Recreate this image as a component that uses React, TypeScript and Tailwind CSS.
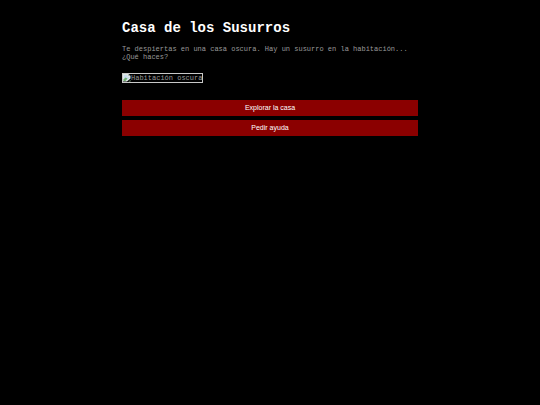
const scene = {
  title: 'Casa de los Susurros',
  text: 'Te despiertas en una casa oscura. Hay un susurro en la habitación... ¿Qué haces?',
  imageAlt: 'Habitación oscura',
  options: ['Explorar la casa', 'Pedir ayuda'],
};

function SceneImage({ alt }: { alt: string }) {
  return (
    <div className="flex w-fit items-start border border-[#c8c8c8]">
      {/* Missing picture icon */}
      <svg viewBox="0 0 16 16" className="h-2 w-2 shrink-0" aria-hidden="true">
        <path d="M0 0H11L15 4V9L8 15H0Z" fill="#dfe9e6" />
        <path d="M2 2H9V6H13V8L7 12H2Z" fill="#c9dcee" />
        <path d="M1 11L5 7L9 9L5 14H1Z" fill="#6fae6f" />
        <path d="M15 12V15H11Z" fill="#8fb58f" />
        <path d="M11 0L15 4H11Z" fill="#8c9694" />
      </svg>
      <span className="text-[7px] leading-[8px]">{alt}</span>
    </div>
  );
}

export default function App() {
  return (
    <div className="min-h-screen bg-black px-5 pt-5 font-['Courier_New',Courier,'Liberation_Mono',monospace] text-[#999999]">
      <main className="mx-auto max-w-[296px]">
        <h1 className="text-[14px] leading-4 font-bold text-white">{scene.title}</h1>
        <p className="mt-[9px] text-[7px] leading-[8px]">{scene.text}</p>

        <div className="mt-3">
          <SceneImage alt={scene.imageAlt} />
        </div>

        <div className="mt-[17px] flex flex-col gap-1">
          {scene.options.map((option) => (
            <button
              key={option}
              type="button"
              className="h-4 w-full cursor-pointer bg-[#8b0000] font-['Liberation_Sans',Arial,sans-serif] text-[7px] leading-[8px] text-white hover:bg-[#a80000]"
            >
              {option}
            </button>
          ))}
        </div>
      </main>
    </div>
  );
}
